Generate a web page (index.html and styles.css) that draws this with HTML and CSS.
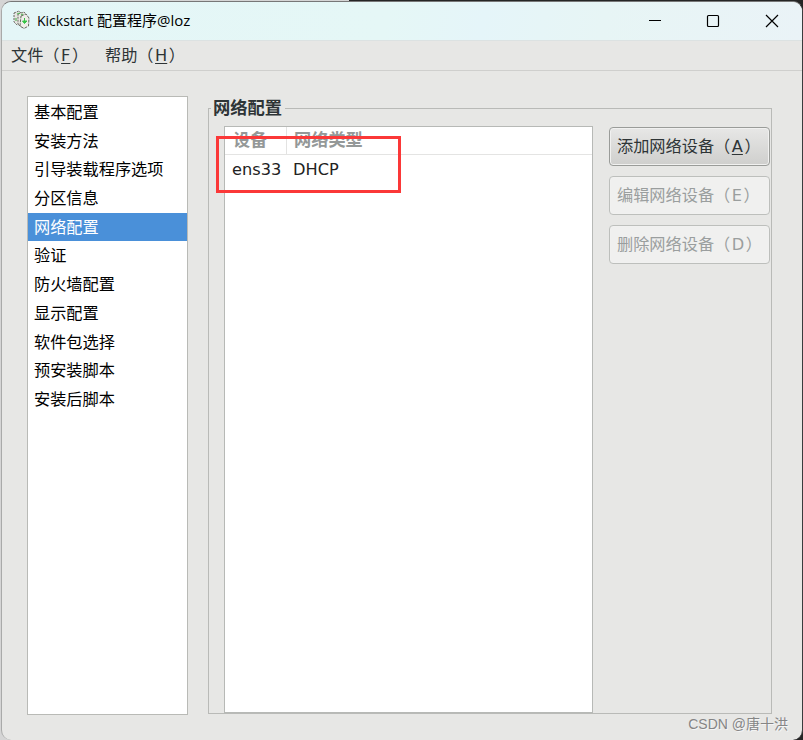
FILE: index.html
```
<!DOCTYPE html>
<html lang="zh-CN">
<head>
<meta charset="utf-8">
<title>Kickstart 配置程序@loz</title>
<link rel="stylesheet" href="styles.css">
</head>
<body>
<div class="desktop">
<div class="window">
  <header class="titlebar">
    <svg class="app-icon" width="18" height="20" viewBox="0 0 18 20" fill="none">
      <path d="M1 3 6 1 9 4 8 14 4 15 1 12Z" fill="#e5e5e0" stroke="#66665f" stroke-dasharray="2 1"/>
      <path d="M5 4 11 2 14 6 13 16 8 17 5 14Z" fill="#e9e9e4" stroke="#66665f" stroke-dasharray="2 1"/>
      <path d="M8 6 13 4 16 8 15.500 16 11 18.500 7 16Z" fill="#eeeee9" stroke="#66665f" stroke-dasharray="3 1"/>
      <path d="M4 4 7 3M3 8v3M8 5l2-1" stroke="#58b85b" stroke-width="1.200"/>
      <path d="M11.500 8v4M9.500 11l2 2.500 2.500-2.500Z" fill="#36c346" stroke="#36c346"/>
    </svg>
    <h1 class="title">Kickstart <span class="host">配置程序@loz</span></h1>
    <div class="controls">
      <svg width="58" height="38" viewBox="0 0 58 38"><path d="M23 18.500h12" stroke="#000"/></svg>
      <svg width="58" height="38" viewBox="0 0 58 38"><rect x="23.500" y="13.500" width="11" height="11" rx="1" fill="none" stroke="#000" stroke-width="1.200"/></svg>
      <svg width="60" height="38" viewBox="0 0 60 38"><path d="m24 13 12 12M36 13 24 25" stroke="#000" stroke-width="1.200"/></svg>
    </div>
  </header>
  <nav class="menubar">
    <span class="menu">文件（<u>F</u>）</span>
    <span class="menu">帮助（<u>H</u>）</span>
  </nav>
  <main class="content">
    <ul class="sections">
      <li>基本配置</li>
      <li>安装方法</li>
      <li>引导装载程序选项</li>
      <li>分区信息</li>
      <li class="selected">网络配置</li>
      <li>验证</li>
      <li>防火墙配置</li>
      <li>显示配置</li>
      <li>软件包选择</li>
      <li>预安装脚本</li>
      <li>安装后脚本</li>
    </ul>
    <section class="frame">
      <h2 class="frame-label">网络配置</h2>
      <div class="devices">
        <div class="row head"><span class="device">设备</span><span class="type">网络类型</span></div>
        <div class="row"><span class="device">ens33</span><span class="type">DHCP</span></div>
        <div class="highlight"></div>
      </div>
      <div class="buttons">
        <button class="button">添加网络设备（<u>A</u>）</button>
        <button class="button" disabled>编辑网络设备（<span class="key">E</span>）</button>
        <button class="button" disabled>删除网络设备（<span class="key">D</span>）</button>
      </div>
    </section>
  </main>
  <div class="watermark">CSDN @唐十洪</div>
</div>
</div>
</body>
</html>
```
FILE: styles.css
```
* { box-sizing: border-box; }

body {
  margin: 0;
  color: #2e3436;
  font: 16.2px/28.7px "DejaVu Sans", "Noto Sans CJK SC", sans-serif;
}

.desktop {
  height: 740px;
  padding: 1px 0 0 1px;
  overflow: hidden;
  background: linear-gradient(#252525, #252525) 349px 0 / 454px 100% no-repeat, #d5d5d5;
}

.window {
  position: relative;
  display: flex;
  flex-direction: column;
  width: 802px;
  height: 739px;
  overflow: hidden;
  border: 1px solid #a9aaa9;
  border-top-color: #777;
  border-right-color: #3a3c3e;
  border-bottom: 0;
  border-radius: 10px;
  background: #e7e7e5;
}

.titlebar {
  display: flex;
  flex: none;
  height: 39px;
  padding-left: 11px;
  border-bottom: 1px solid #dce2e2;
  background: linear-gradient(100deg, #e4f6f7, #e5f7f6 48%, #e5f5f9 60%, #e7f5f5 75%, #eaf3f7);
}

.app-icon { margin-top: 8px; }

.title {
  flex: 1;
  margin: 0 0 0 6px;
  color: #000;
  font: 14px/37px "Open Sans", "Noto Sans CJK SC", sans-serif;
}

.host { font-size: 15px; }

.controls { display: flex; }

.menubar {
  display: flex;
  flex: none;
  height: 30px;
  padding-left: 9px;
  border-bottom: 1px solid #cfcfcd;
  line-height: 30px;
}

.menu { width: 94px; white-space: nowrap; }

u, .key { margin: 0 1.5px; }

u { text-underline-offset: 2px; }

.content { display: flex; flex: 1; padding: 25px 30px 24px 25px; }

.sections {
  width: 161px;
  height: 619px;
  margin: 0;
  padding: 1px 0 0;
  border: 1px solid #b9bab6;
  background: #fff;
  color: #000;
  line-height: 29.5px;
  list-style: none;
}

.sections li { height: 28.7px; padding-left: 6px; }

.sections .selected { background: #4a90d9; color: #fff; }

.frame {
  position: relative;
  display: flex;
  width: 564px;
  height: 606px;
  margin: 12px 0 0 20px;
  padding: 17px 1px 0 15px;
  border: 1px solid #b9bab7;
}

.frame-label {
  position: absolute;
  top: -15px;
  left: 2px;
  margin: 0;
  padding: 0 3px 0 2px;
  background: #e7e7e5;
  font-size: 17.3px;
  font-weight: 700;
  line-height: 28px;
}

.devices {
  position: relative;
  width: 369px;
  height: 587px;
  border: 1px solid #b7b9b6;
  background: #fff;
  color: #222;
}

.row { display: flex; height: 29px; line-height: 30px; }

.head {
  height: 28px;
  border-bottom: 1px solid #e4e4e3;
  color: #949898;
  font-size: 17.2px;
  font-weight: 700;
  line-height: 27px;
}

.device { width: 61px; padding-left: 7px; }

.type { padding-left: 7px; }

.head .device { width: 62px; padding-left: 8px; border-right: 1px solid #e3e3e2; }

.head .type { padding-left: 7px; }

.highlight {
  position: absolute;
  top: 9px;
  left: -9px;
  width: 185px;
  height: 57px;
  border: 3px solid #fb3838;
}

.buttons { display: flex; flex-direction: column; gap: 10px; width: 161px; margin: 1px 0 0 16px; }

.button {
  height: 39px;
  padding: 1px 0 0 7px;
  border: 1px solid #9a9c99;
  border-radius: 4px;
  background: linear-gradient(#e7e7e6, #cfcfcd);
  box-shadow: inset 0 0 0 1px #f1f1f0;
  color: #2e3436;
  font: inherit;
  text-align: left;
  white-space: nowrap;
}

.button:disabled {
  border-color: #bdbfbc;
  background: #f0f0ef;
  color: #9a9e9e;
}

.watermark {
  position: absolute;
  right: 14px;
  bottom: 6px;
  color: #858585;
  font: 14px/20px "Liberation Sans", "Noto Sans CJK SC", sans-serif;
  text-shadow: 1px 1px #f5f5f5;
}
```
